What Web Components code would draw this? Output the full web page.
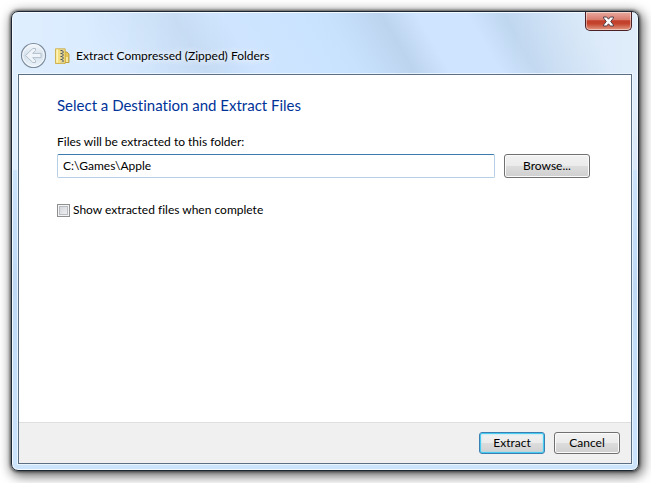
<!DOCTYPE html>
<html lang="en">
<head>
<meta charset="utf-8">
<title>Extract Compressed (Zipped) Folders</title>
<style>
html, body { margin: 0; }
body {
  box-sizing: border-box;
  min-height: 100vh;
  padding: 11px 12px 12px 11px;
  display: flex;
  background: #fff;
  color: #000;
  font: 12px/16px Lato, "Open Sans", sans-serif;
  font-variant-ligatures: none;
}
</style>
</head>
<body>
<aero-window>
  <wizard-title slot="title">Extract Compressed (Zipped) Folders</wizard-title>
  <extract-form>Select a Destination and Extract Files</extract-form>
  <aero-button slot="actions" kind="default">Extract</aero-button>
  <aero-button slot="actions">Cancel</aero-button>
</aero-window>

<template id="aero-window">
  <style>
    :host {
      flex: 1;
      box-sizing: border-box;
      display: flex;
      flex-direction: column;
      min-width: 0;
      padding: 0 6px 6px 6px;
      border: 1px solid #1d2733;
      border-radius: 7px;
      box-shadow: inset 0 0 0 1px #f3faff, 0 0 3px 1px rgba(0,0,0,.55), 2px 3px 12px 2px rgba(0,0,0,.6);
      background:
        linear-gradient(90deg, rgba(255,255,255,.35), rgba(255,255,255,0) 35%, rgba(255,255,255,0) 80%, rgba(255,255,255,.3)) 0 0 / 100% 158px no-repeat,
        linear-gradient(60deg, #cfe6ff 0 22%, #c3daf3 35%, #cfe5ff 42%, #c8e2fe 56%, #bdd4ee 64%, #cfe5ff 69%, #cfe5ff 76%, #c0d7f0 81%, #d3e5f8 92%) 0 0 / 100% 158px no-repeat,
        linear-gradient(#bdd6f2, #cfe5fd 30%, #bfd9f5 60%, #cde4fd);
    }
    header { display: flex; flex-direction: column; height: 62px; }
    .close {
      align-self: flex-end;
      box-sizing: border-box;
      width: 47px;
      height: 19px;
      padding: 0;
      display: grid;
      place-items: center;
      border: 1px solid #4b2025;
      border-top: 0;
      border-radius: 0 0 5px 5px;
      background: linear-gradient(#e9aa9f, #d8796b 45%, #c2402b 48%, #c4432d 65%, #e39a83);
      box-shadow: inset 0 0 0 1px rgba(255,255,255,.45);
    }
    main {
      flex: 1;
      display: flex;
      flex-direction: column;
      border: 1px solid #5d6f84;
      box-shadow: 0 0 0 1px rgba(240,249,255,.8);
      background: #fff;
    }
    .body { flex: 1; }
    footer {
      display: flex;
      justify-content: flex-end;
      gap: 9px;
      padding: 9px 11px;
      border-top: 1px solid #dfdfdf;
      background: #f0f0f0;
    }
  </style>
  <header>
    <button class="close" aria-label="Close">
      <svg width="13" height="11" viewBox="0 0 13 11"><path d="M1.500 1h3.200l1.800 2.200L8.300 1h3.200v1L8.700 5.500l2.800 3.500v1H8.300L6.500 7.800 4.700 10H1.500V9l2.800-3.500L1.500 2z" fill="#fff" stroke="#54404a"/></svg>
    </button>
    <slot name="title"></slot>
  </header>
  <main>
    <div class="body"><slot></slot></div>
    <footer><slot name="actions"></slot></footer>
  </main>
</template>

<template id="wizard-title">
  <style>
    :host { display: flex; align-items: center; gap: 6px; padding: 11px 2px 0; }
    button { width: 27px; height: 27px; padding: 0; border: 0; background: none; }
    svg { display: block; }
    .zip { margin-left: 2px; }
    span { text-shadow: 0 0 6px #fff, 0 0 8px #fff; }
  </style>
  <button aria-label="Back" disabled>
    <svg width="27" height="27" viewBox="0 0 27 27">
      <defs><linearGradient id="disc" x2="0" y2="1"><stop stop-color="#f5f9fd"/><stop offset=".5" stop-color="#d5e1ec"/><stop offset="1" stop-color="#edf5fc"/></linearGradient></defs>
      <circle cx="13.500" cy="13.500" r="12" fill="url(#disc)" stroke="#7d8d9d" stroke-width="1.200"/>
      <circle cx="13.500" cy="13.500" r="10.800" fill="none" stroke="#f6faff"/>
      <path d="M5.500 13.500L12.800 6.500h2.700v2l-2.800 2.900H21v4.200h-8.300l2.800 2.900v2h-2.700z" fill="#eef4f9" stroke="#b4c0cb" stroke-linejoin="round"/>
    </svg>
  </button>
  <svg class="zip" width="15" height="16" viewBox="0 0 15 16">
    <path d="M9 4h3l2 2v8.500H9z" fill="#e4c65a" stroke="#b18f2e" stroke-width=".8"/>
    <path d="M12 9v5" stroke="#fff6bf" stroke-width="1.400"/>
    <path d="M.5.800h9.700v14.700H.500z" fill="#f5df80" stroke="#c8a638" stroke-width=".8"/>
    <path d="M2.200 1.500v13" stroke="#fff6bd" stroke-width="1.500"/>
    <path d="M5.700 1.200h3v14h-3z" fill="#d8cf9c"/>
    <path d="M5.500 2.500h2M7 4h2M5.500 5.500h2M7 7h2M5.500 8.500h2M7 10h2M5.500 11.500h2M7 13h2" stroke="#4f5557"/>
  </svg>
  <span><slot></slot></span>
</template>

<template id="aero-button">
  <style>
    :host { display: block; min-width: 66px; }
    :host([kind="wide"]) { min-width: 86px; }
    button {
      display: block;
      box-sizing: border-box;
      width: 100%;
      height: 22px;
      padding: 0 6px;
      border: 1px solid #707070;
      border-radius: 3px;
      background: linear-gradient(#f2f2f2, #ebebeb 49%, #dddddd 50%, #cfcfcf);
      box-shadow: inset 0 0 0 1px #fbfbfb;
      color: inherit;
      font: inherit;
    }
    :host([kind="wide"]) button { height: 24px; }
    :host([kind="default"]) button { border-color: #3c7fb1; box-shadow: inset 0 0 0 1px #48cbf0, inset 0 0 2px 1px #8fe0f7; }
  </style>
  <button type="button"><slot></slot></button>
</template>

<template id="extract-form">
  <style>
    :host { display: block; padding: 19px 41px 20px 38px; }
    h1 { margin: 0 0 18px; color: #003399; font-size: 15px; line-height: 22px; font-weight: 400; }
    label { display: block; }
    .row { display: flex; gap: 9px; margin-top: 4px; }
    .path {
      flex: 1;
      min-width: 0;
      box-sizing: border-box;
      height: 24px;
      margin: 0;
      padding: 0 5px 2px;
      border: 1px solid #b5cfe7;
      border-top-color: #3d7bad;
      border-radius: 2px;
      background: #fff;
      color: inherit;
      font: inherit;
      outline: 0;
    }
    .check { display: flex; align-items: center; gap: 3px; margin-top: 24px; }
    .check input {
      appearance: none;
      box-sizing: border-box;
      width: 13px;
      height: 13px;
      margin: 0;
      border: 1px solid #8e8f8f;
      background: linear-gradient(135deg, #cbcfd5, #f6f6f6);
      box-shadow: inset 0 0 0 1px #f4f4f4, inset 0 0 0 2px #b9bdc3;
    }
  </style>
  <h1><slot></slot></h1>
  <label for="path">Files will be extracted to this folder:</label>
  <div class="row">
    <input class="path" id="path" type="text" value="C:\Games\Apple" spellcheck="false">
    <aero-button kind="wide">Browse...</aero-button>
  </div>
  <div class="check"><input id="show" type="checkbox"><label for="show">Show extracted files when complete</label></div>
</template>

<script>
for (const name of ["aero-window", "wizard-title", "aero-button", "extract-form"]) {
  customElements.define(name, class extends HTMLElement {
    constructor() {
      super();
      this.attachShadow({ mode: "open" })
        .append(document.getElementById(name).content.cloneNode(true));
    }
  });
}
</script>
</body>
</html>
